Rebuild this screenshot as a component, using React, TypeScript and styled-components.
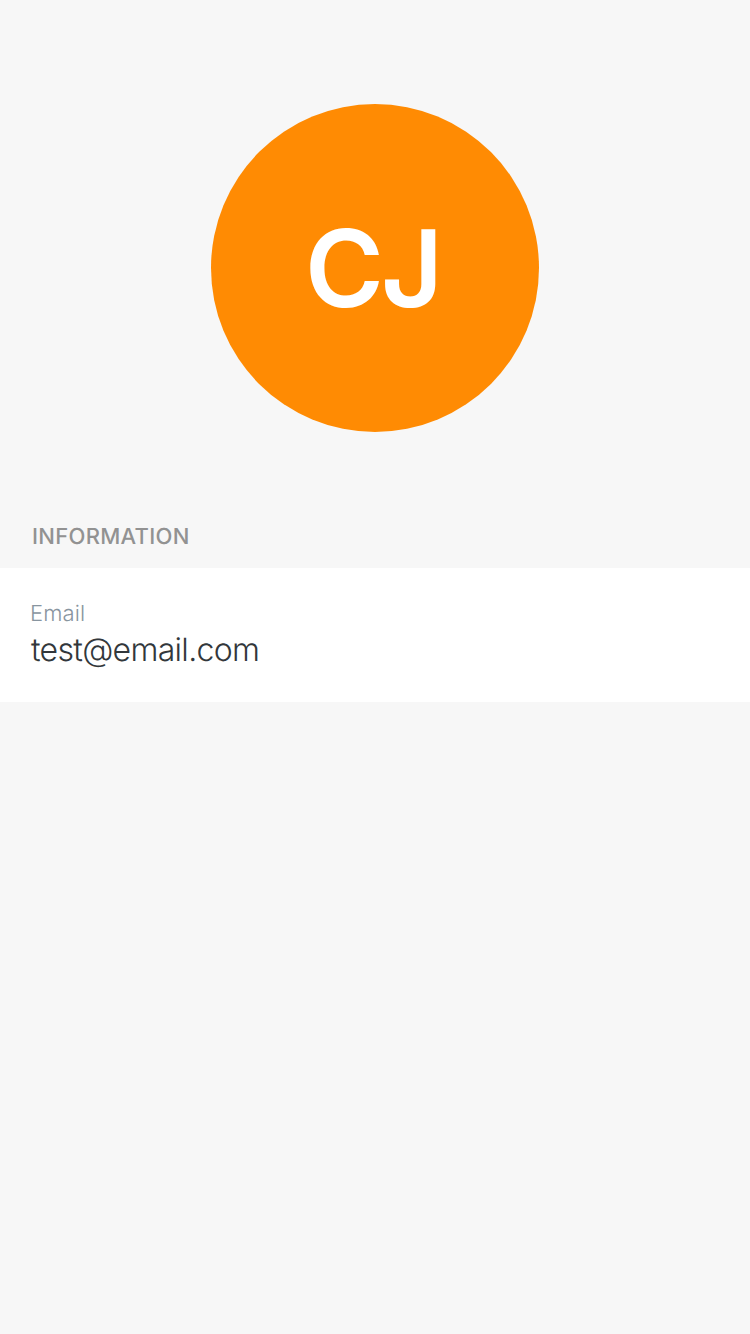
import React from "react";
import styled, { createGlobalStyle } from "styled-components";

const GlobalStyle = createGlobalStyle`
  *, *::before, *::after { box-sizing: border-box; }
  body {
    margin: 0;
    background: #f7f7f7;
    font-family: Inter, "Liberation Sans", sans-serif;
    text-rendering: geometricPrecision;
  }
`;

const Page = styled.main`
  display: flex;
  flex-direction: column;
  min-height: 1334px;
  padding-top: 104px;
  background: #f7f7f7;
`;

const Avatar = styled.div`
  display: flex;
  align-items: center;
  justify-content: center;
  align-self: center;
  width: 328px;
  height: 328px;
  padding: 0 5px 0 0;
  border-radius: 50%;
  background: #ff8b03;
`;

const Initials = styled.span`
  color: #fff;
  font-size: 107px;
  font-weight: 600;
  line-height: 130px;
  letter-spacing: -3px;
`;

const SectionTitle = styled.h2`
  margin: 91px 0 0;
  padding-left: 32px;
  height: 45px;
  color: #929292;
  font-size: 22px;
  font-weight: 550;
  line-height: 28px;
  letter-spacing: 0.3px;
`;

const Field = styled.div`
  display: flex;
  flex-direction: column;
  height: 134px;
  padding: 32px 30px 0;
  background: #fff;
`;

const Label = styled.span`
  color: #8895a0;
  font-size: 22px;
  font-weight: 350;
  line-height: 28px;
  letter-spacing: 0.15px;
`;

const Value = styled.span`
  margin-top: 2px;
  padding-left: 1px;
  color: #32373b;
  font-size: 32px;
  font-weight: 300;
  line-height: 40px;
  letter-spacing: -0.68px;
`;

export default function App() {
  return (
    <>
      <GlobalStyle />
      <Page>
        <Avatar>
          <Initials>CJ</Initials>
        </Avatar>
        <SectionTitle>INFORMATION</SectionTitle>
        <Field>
          <Label>Email</Label>
          <Value>test@email.com</Value>
        </Field>
      </Page>
    </>
  );
}
